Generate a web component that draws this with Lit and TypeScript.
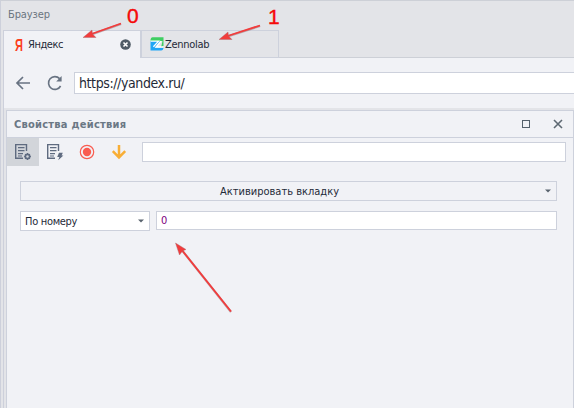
import { LitElement, html, css, svg } from "lit";
import { customElement } from "lit/decorators.js";

@customElement("app-root")
export class AppRoot extends LitElement {
  static styles = css`
    :host {
      display: block;
      position: relative;
      width: 574px;
      height: 408px;
      overflow: hidden;
      background: #e3e4e8;
      color: #1f2a38;
      font: 11px/14px "DejaVu Sans Condensed", "DejaVu Sans", sans-serif;
      font-stretch: condensed;
    }
    * { box-sizing: border-box; }
    svg { display: block; flex: none; }
    span { white-space: nowrap; }
    .window {
      height: 408px;
      border-left: 1px solid #cdd0db;
      border-top: 1px solid #cdd0d7;
      display: flex;
      flex-direction: column;
    }
    .title { height: 29px; padding: 7px 0 0 7px; color: #6b7580; }
    .title span { letter-spacing: -0.1px; }
    .body {
      flex: 1;
      margin-left: 2px;
      border-left: 1px solid #cdd0db;
      display: flex;
      flex-direction: column;
    }
    .tabs { display: flex; height: 28px; }
    .tab {
      display: flex;
      align-items: center;
      width: 137px;
      border: 1px solid #cdd1dc;
      border-left: 0;
    }
    .tab.active { background: #f1f2f6; border-bottom: 0; padding-left: 10px; }
    .tab.active span { width: 92px; margin-left: 4px; letter-spacing: -0.45px; }
    .tab.other { border-left: 1px solid #cdd1dc; width: 138px; padding-left: 8px; }
    .tab.other span { margin-left: 1px; letter-spacing: -0.3px; padding-top: 1px; }
    .rest { flex: 1; border-bottom: 1px solid #cdd0d7; }
    .nav { height: 50px; background: #f1f2f6; display: flex; align-items: center; padding-left: 11px; }
    .nav .reload { margin-left: 16px; }
    .url {
      margin-left: 11px;
      flex: 1;
      height: 22px;
      background: #fff;
      border: 1px solid #cdd1dc;
      border-right: 0;
      padding: 2px 0 0 4px;
      font-size: 14px;
      line-height: 17px;
      letter-spacing: -0.4px;
    }
    .panel {
      flex: 1;
      margin: 2px 0 0 2px;
      border: 1px solid #cdd1dc;
      border-bottom: 0;
      background: #f1f2f6;
    }
    .head {
      height: 27px;
      border-bottom: 1px solid #cdd1dc;
      display: flex;
      align-items: center;
      padding: 0 10px 0 7px;
      color: #6b7885;
      font-weight: bold;
      letter-spacing: 0.25px;
    }
    .head span { flex: 1; padding-top: 1px; }
    .head .close { margin-left: 23px; }
    .tools { height: 28px; display: flex; align-items: center; }
    .tool { width: 32px; height: 28px; display: flex; align-items: center; justify-content: center; }
    .tool.on { background: #d2d5da; }
    .search { flex: 1; height: 20px; margin: 0 7px; background: #fff; border: 1px solid #cdd1dc; }
    .form { padding: 15px 16px 0 13px; }
    .action, .select, .value { border: 1px solid #cdd1dc; display: flex; align-items: center; }
    .action { height: 20px; padding-right: 5px; }
    .action span { flex: 1; text-align: center; padding: 1px 7px 0 0; }
    .row { display: flex; margin-top: 10px; }
    .select { width: 130px; height: 20px; background: #fff; padding: 0 5px 0 4px; }
    .select span { flex: 1; letter-spacing: -0.3px; padding-top: 1px; }
    .value { flex: 1; height: 19px; margin-left: 6px; background: #fff; padding-left: 4px; color: #800080; }
    .marks { position: absolute; left: 0; top: 0; }
    .num { font: 21px "Liberation Sans", sans-serif; fill: #f50a0a; stroke: #f50a0a; stroke-width: 0.4; }
    .ya { font: bold 17px "Liberation Sans", sans-serif; fill: #fc3f1d; }
  `;

  private caret() {
    return html`<svg width="6" height="4"><path d="M0 .5h6L3 3.5z" fill="#59636e" /></svg>`;
  }

  private sheet(kind: "gear" | "bolt") {
    return html`<svg width="18" height="18" viewBox="0 0 18 18" fill="none" stroke="#5f6b80" stroke-width="1.4">
      <path d="M12.5 8V1.6H1.7V15.3H9" />
      <path d="M4 4.7h6.5M4 7.7h6.5M4 10.7h5M4 13h4" stroke-width="1.2" />
      ${kind === "gear"
        ? svg`<circle cx="13.5" cy="13.5" r="2.1" stroke-width="1.6" /><path d="M13.5 10.1v1.4M13.5 15.5v1.4M10.1 13.5h1.4M15.5 13.5h1.4M11.1 11.1l1 1M14.9 14.9l1 1M15.9 11.1l-1 1M12.1 14.9l-1 1" stroke-width="1.3" />`
        : svg`<path d="M13 9.8h3.8l-1.2 2.6h1.8l-5.2 4.9 1.2-3.4h-2.2z" fill="#5f6b80" stroke="none" />`}
    </svg>`;
  }

  render() {
    return html`
      <div class="window">
        <div class="title"><span>Браузер</span></div>
        <div class="body">
          <div class="tabs">
            <div class="tab active">
              <svg width="10" height="20"><text class="ya" x="1" y="16" textLength="8" lengthAdjust="spacingAndGlyphs">Я</text></svg>
              <span>Яндекс</span>
              <svg width="11" height="11"><circle cx="5.5" cy="5.5" r="5.3" fill="#4f5b66" /><path d="M3.5 3.5l4 4M7.5 3.5l-4 4" stroke="#fff" stroke-width="1.6" /></svg>
            </div>
            <div class="tab other">
              <svg width="14" height="14" viewBox="0 0 14 14">
                <path d="M2.5 .3H13.5V9L11 10.5L12.5 4H.6V2.2Q1 .4 2.5 .3z" fill="#3fce62" />
                <path d="M.5 4H10L5 10.5H13.4V11.5Q13 13.4 11.2 13.5H.5z" fill="#20a5f5" />
                <path d="M.6 4.1H8.6L3.4 9.8M13.4 10H6L11.2 4.1" stroke="#fff" stroke-width="1.3" fill="none" />
              </svg>
              <span>Zennolab</span>
            </div>
            <div class="rest"></div>
          </div>
          <div class="nav">
            <svg width="16" height="16" fill="none" stroke="#687382" stroke-width="1.7"><path d="M15 8H2M8 2L2 8l6 6" /></svg>
            <svg class="reload" width="16" height="16" fill="none" stroke="#687382" stroke-width="1.6"><path d="M12.6 3.6A6.4 6.4 0 1 0 13.6 11" /><path d="M14.6 1v5.4H9.2z" fill="#687382" stroke="none" /></svg>
            <div class="url"><span>https://yandex.ru/</span></div>
          </div>
          <div class="panel">
            <div class="head">
              <span>Свойства действия</span>
              <svg width="8" height="8"><rect x=".5" y=".5" width="7" height="7" fill="none" stroke="#55616c" /></svg>
              <svg class="close" width="10" height="10"><path d="M1 1l8 8M9 1L1 9" stroke="#5d6872" stroke-width="1.6" /></svg>
            </div>
            <div class="tools">
              <div class="tool on">${this.sheet("gear")}</div>
              <div class="tool">${this.sheet("bolt")}</div>
              <div class="tool"><svg width="16" height="16"><circle cx="8" cy="8" r="6.7" fill="none" stroke="#f95c50" stroke-width="1.2" /><circle cx="8" cy="8" r="4.2" fill="#f95c50" /></svg></div>
              <div class="tool"><svg width="16" height="16" fill="none" stroke="#f8ae36" stroke-width="2.5"><path d="M8 1v12M1.8 7.2L8 13.4l6.2-6.2" /></svg></div>
              <div class="search"></div>
            </div>
            <div class="form">
              <div class="action"><span>Активировать вкладку</span>${this.caret()}</div>
              <div class="row">
                <div class="select"><span>По номеру</span>${this.caret()}</div>
                <div class="value"><span>0</span></div>
              </div>
            </div>
          </div>
        </div>
      </div>
      <svg class="marks" width="574" height="408">
        <g stroke="#9b7379" stroke-width="2.2" opacity=".6"><path d="M121 24L90 35M260 26L226 37M231 312L181 249" /></g>
        <g stroke="#f23c3c" stroke-width="1.8"><path d="M121 23.5L90 34.5M260 25.5L226 36.5M231 311.5L181 249" /></g>
        <g fill="#f23c3c" stroke="#a5686c" stroke-width=".4">
          <path d="M83 37.5L92 30L92.5 34L96 37.5z" />
          <path d="M219 39.5L228 32L228.5 36L232 39.5z" />
          <path d="M175.5 243L186 249.5L182.5 251L179.5 255z" />
        </g>
        <text class="num" x="127" y="23">0</text>
        <text class="num" x="268" y="24">1</text>
      </svg>
    `;
  }
}
